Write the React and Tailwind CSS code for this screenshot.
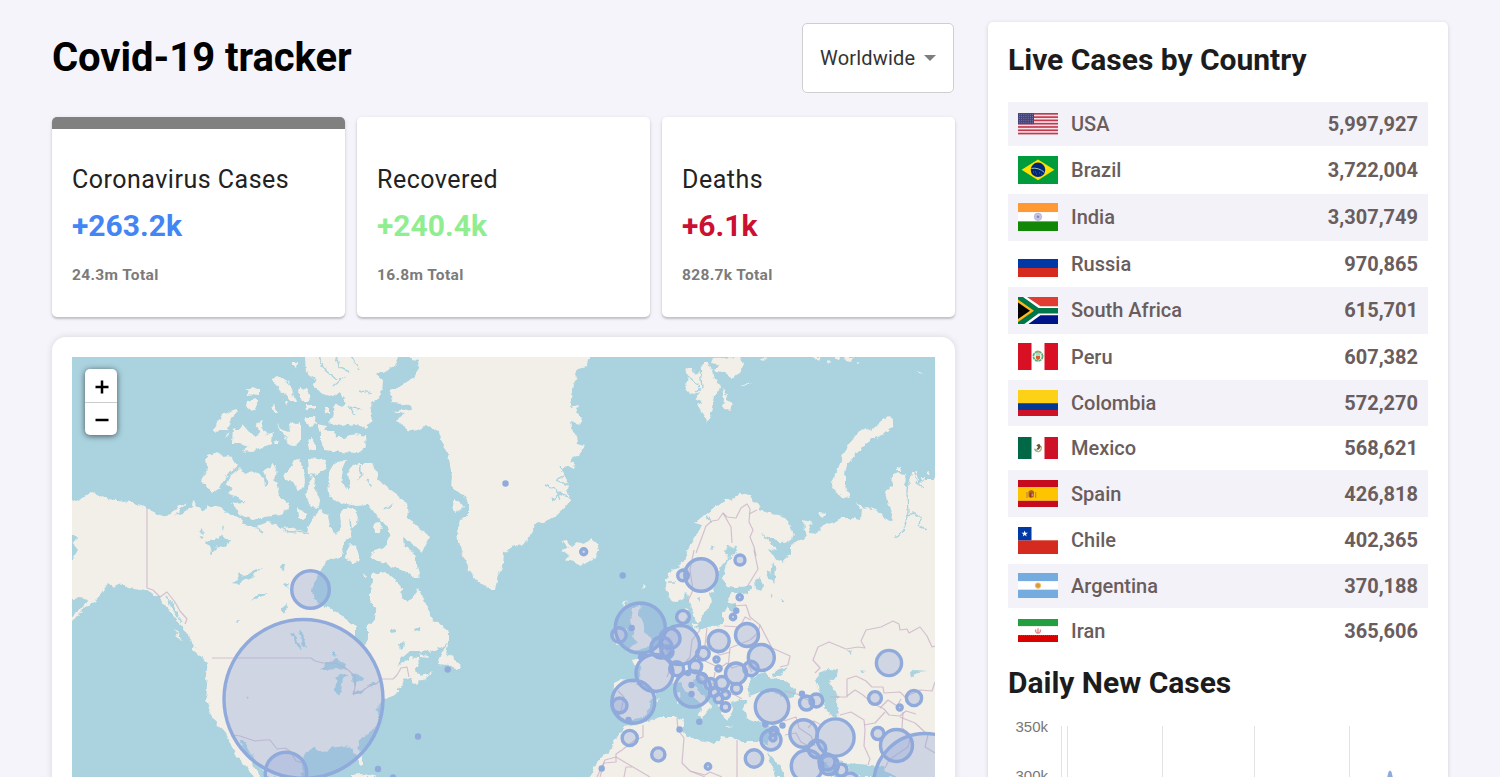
import React from "react";

const LAND = [
  // North American mainland
  "72,503 82,498 92,492 100,496 108,499 125,501 141,505 148,509 160,515 167,517 172,512 180,506 187,503 175,515 182,513 192,507 193,500 199,508 204,511 208,505 212,509 218,506 226,512 240,518 243,524 255,527 268,522 275,524 280,528 290,527 300,530 307,532 309,525 313,518 320,510 328,516 330,526 336,535 341,527 340,514 345,508 352,507 358,514 357,524 350,530 352,537 345,540 343,550 340,557 330,560 325,563 320,570 317,577 313,583 312,592 314,598 318,603 328,608 337,613 345,618 350,623 356,626 356,637 359,644 364,646 368,638 368,627 375,618 376,611 370,600 370,590 373,583 371,572 377,574 385,572 395,580 402,588 401,597 408,602 415,595 418,588 425,602 430,613 433,620 440,625 449,632 449,643 440,648 430,652 418,651 410,651 402,658 396,668 402,662 410,657 418,658 419,665 415,671 420,676 428,674 433,672 425,679 415,684 412,682 413,677 405,680 398,690 398,694 390,697 384,699 381,704 376,709 378,715 378,725 372,731 366,735 359,741 358,748 362,757 362,766 359,763 356,755 352,748 345,746 337,747 330,748 327,752 313,748 305,753 302,763 303,777 268,777 262,769 255,759 248,748 243,740 240,740 243,750 249,759 255,768 261,777 255,777 247,768 237,757 231,745 225,731 217,724 210,711 206,700 207,690 206,675 208,663 200,654 192,643 187,632 178,622 170,612 165,605 158,597 150,592 140,590 128,588 122,583 113,587 108,583 100,597 92,603 85,608 73,620 72,620",
  "206,456 218,452 224,457 230,456 238,466 230,472 225,478 220,488 212,493 206,484 202,482 207,468",
  "240,468 245,474 252,471 258,474 264,477 265,487 268,484 264,470 274,464 276,467 275,477 279,495 290,505 288,509 280,515 265,517 252,520 240,514 232,503 245,502 235,497 228,493 233,488 226,484 230,476",
  "235,409 237,413 232,418 228,430 222,430 217,433 213,430 216,424 222,415",
  "233,427 238,431 243,425 250,433 258,437 259,431 257,425 261,419 263,430 267,435 273,432 272,444 262,447 250,453 243,451 248,447 240,443 232,443",
  "277,423 282,430 290,432 289,424 295,423 301,422 301,440 295,446 289,443 284,436 288,437 280,431",
  "273,378 277,376 280,377 288,382 292,390 296,402 292,402 286,395 281,392 275,385",
  "247,390 253,387 259,389 259,395 254,394 248,395",
  "247,401 257,399 257,405 252,411 246,406",
  "300,387 306,389 310,397 308,402 303,402 299,394",
  "272,404 275,407 278,413 274,413",
  "306,405 316,405 316,408 307,409",
  "305,417 315,417 317,424 309,426 306,422",
  "307,441 313,438 316,444 315,451 309,449",
  "292,361 297,361 296,368 292,365",
  "324,407 329,407 329,413 325,412",
  "284,403 288,401 287,405",
  "228,436 230,431 225,437",
  "275,441 278,440 278,444 276,444",
  "305,357 398,357 395,366 385,372 376,374 383,380 382,390 377,400 371,402 372,412 371,422 366,429 356,424 340,426 328,423 333,418 335,403 341,407 346,403 340,392 332,397 320,393 313,385 316,380 306,372",
  "318,424 327,426 324,431 333,431 338,437 345,437 355,434 365,436 366,447 358,453 340,452 325,450 321,443 321,433",
  "284,474 289,470 294,460 300,459 303,470 305,480 304,488 298,490 293,482 286,480",
  "308,458 317,459 326,460 324,470 318,475 309,474",
  "311,475 316,478 315,488 320,500 319,508 311,507 305,495 309,487",
  "297,507 306,514 306,519 298,518",
  "329,494 328,480 330,470 336,462 347,461 343,470 341,482 348,489 351,484 348,475 351,467 360,463 372,463 378,475 377,480 387,487 395,492 403,500 410,512 407,518 418,526 429,536 426,544 422,552 410,542 403,537 404,546 412,552 417,565 420,578 414,578 407,572 393,567 383,562 372,560 371,552 385,548 387,541 391,533 386,525 375,515 368,505 356,506 347,504 335,501",
  "374,523 380,522 382,530 376,533 373,529",
  "350,543 357,549 360,559 352,564 350,560 343,558 348,550",
  "365,573 366,577 363,577",
  "448,643 446,655 453,657 459,663 460,669 456,668 449,665 437,664 441,655",
  "418,654 427,656 428,658 420,657",
  "193,646 201,652 211,660 209,664 200,656 193,650",
  "174,628 178,634 182,641 177,637",
  "350,775 360,774 370,775 378,777 350,777",
  // Greenland
  "409,357 590,357 586,366 578,368 575,378 573,390 571,407 578,405 576,414 582,418 580,425 570,422 572,432 577,436 578,444 585,446 578,455 570,460 575,464 573,469 567,466 562,470 568,480 567,490 571,500 568,505 555,517 540,523 535,524 528,540 520,546 513,545 510,550 503,553 502,567 498,575 495,590 490,590 485,585 478,583 470,572 465,560 463,555 458,541 457,530 460,520 468,514 468,503 464,495 455,490 451,485 452,478 450,465 447,450 441,440 439,432 432,428 424,427 415,431 408,430 400,424 397,419 405,414 393,411 411,409 410,405 393,403 390,395 391,391 405,383 413,378 419,368 418,361",
  "454,499 459,502 464,508 456,512 453,507",
  // Iceland
  "562,541 567,540 571,546 575,543 580,544 586,543 591,539 597,544 599,550 596,557 588,562 581,565 573,561 565,559 571,555 562,551 568,549",
  // Svalbard
  "686,368 692,368 696,376 699,372 703,363 708,363 712,370 714,380 722,385 715,395 713,408 710,417 706,422 702,412 697,405 703,402 696,398 700,392 690,395 686,386 688,376",
  "714,358 740,357 744,365 740,373 731,378 724,373 714,370 720,366 712,363",
  "722,388 727,396 726,400 733,403 731,411 726,409 722,407 724,400",
  "760,359 768,357 762,361", "741,386 752,383 745,387", "918,370 923,373 919,372",
  "814,357 821,357 819,361 816,360", "826,360 829,363 826,364", "833,357 840,357 838,360", "843,357 854,357 851,361 846,360", "857,362 860,363 857,364",
  // Novaya Zemlya
  "888,416 893,419 892,426 884,434 870,440 862,448 855,455 847,465 845,475 845,485 851,498 843,497 838,492 831,488 833,480 839,465 845,450 855,435 866,428 872,430 880,422",
  "819,512 825,513 823,518 818,515", "855,502 860,504 863,508 860,508",
  "896,468 900,467 901,471 896,471", "928,471 930,475 926,474", "921,477 926,477 922,481",
  // British Isles
  "632,608 641,606 637,615 643,620 645,632 652,640 650,647 637,650 629,651 637,643 633,637 635,630 630,620",
  "613,640 614,632 620,626 627,630 625,640 617,645", "623,603 627,601 624,607", "642,585 645,587 643,590",
  // Eurasia and Africa
  "935,480 925,480 919,484 916,472 912,472 910,482 906,486 905,474 899,473 893,475 892,485 885,492 888,505 892,515 891,523 880,512 867,507 862,508 861,520 852,518 842,518 835,522 824,525 818,533 810,532 808,526 813,523 804,520 805,530 807,537 800,540 790,545 790,553 783,558 781,552 775,557 777,551 770,542 762,534 770,538 783,542 792,540 794,534 788,522 778,514 770,513 758,510 761,506 753,502 750,495 740,493 737,498 728,499 718,505 708,513 702,518 695,523 702,525 697,535 690,545 684,560 678,567 668,573 666,587 669,597 673,603 682,600 687,593 689,602 693,612 697,624 702,620 706,609 712,602 710,593 715,587 718,575 722,565 729,557 724,551 727,546 737,547 735,554 728,560 725,568 723,578 727,587 735,588 752,585 752,590 744,593 733,593 728,597 729,603 736,602 736,610 731,611 727,606 723,613 723,625 710,626 700,630 693,628 686,626 688,617 687,608 680,611 676,617 678,627 672,628 667,630 660,638 657,647 650,653 645,653 642,658 632,660 635,666 640,667 641,674 637,682 620,680 614,683 613,700 615,710 621,717 629,720 643,717 650,707 652,698 658,692 667,687 672,683 680,681 685,690 693,697 702,703 703,711 696,713 703,718 707,712 712,706 705,698 698,690 693,680 699,677 704,687 712,695 717,703 720,711 728,721 733,711 730,703 740,700 748,700 744,708 746,717 754,722 762,720 770,722 771,732 767,744 758,742 743,742 733,738 722,736 715,744 700,740 688,737 682,730 684,720 677,717 660,717 645,722 629,726 625,727 614,741 612,748 605,755 597,763 592,772 589,777 935,777",
  "676,693 680,692 681,702 677,704", "725,725 734,726 726,727", "760,724 766,723 762,727", "655,700 659,699 657,702", "692,623 698,626 692,628",
];

const WATER = [
  "748,686 753,676 764,672 770,678 776,680 785,680 795,690 795,696 787,698 772,692 760,692 750,696",
  "772,674 779,669 788,667 782,674 774,678",
  "815,680 822,672 830,669 837,670 836,677 829,683 836,693 841,697 836,700 839,708 838,717 832,717 825,708 820,693",
  "767,752 772,758 780,766 785,777 775,777 771,764",
  "815,757 821,760 828,765 838,770 840,777 832,777 822,767",
  "840,760 847,763 870,765 883,767 888,772 897,777 860,777 848,770",
  "72,599 80,598 88,600 82,608 72,616", "72,534 76,538 74,545 78,550 72,560",
  "205,541 215,539 222,535 230,540 227,548 218,546 212,552 210,546",
  "232,583 238,580 237,573 245,576 255,570 261,568 252,577 243,581 240,584",
  "250,601 258,594 267,594 260,597",
  "290,632 295,633 298,641 303,650 299,649 294,640", "299,630 303,633 306,648 302,645",
  "321,669 327,663 336,659 340,662 346,665 347,670 337,669 328,670",
  "337,676 343,674 349,675 343,678 341,692 337,695 335,690",
  "351,673 358,674 364,681 361,682 355,681 356,687 353,684",
  "352,694 358,690 367,688 360,693 353,696", "367,687 375,683 377,685 369,687",
  "331,652 335,652 334,656 331,655", "246,695 250,698 248,699",
  "754,580 760,577 764,585 761,591 755,588", "765,570 770,572 773,579 768,578",
  "768,548 776,551 785,559 783,563 774,558", "770,550 782,552 790,553 786,559 776,558",
  "909,734 912,738 909,738", "910,672 915,670 929,671 918,672 911,678", "850,655 848,650 852,648",
  "281,565 285,565 284,570 280,569", "282,608 287,604 286,611 282,613",
  "697,598 701,597 700,602", "712,545 714,548 710,550", "770,594 773,596 771,598",
  "773,563 776,570 774,583 771,575", "781,599 785,601 784,603 781,601", "860,670 866,671 863,673",
  "200,532 203,529 204,534", "199,536 204,537 200,539", "222,528 224,525 223,531", "236,620 241,620 238,622",
  "211,550 213,555 210,554", "414,629 420,627 421,630 415,631", "391,630 395,629 396,632 391,633", "399,645 404,641 405,645 400,649",
  "284,584 289,582 288,588", "745,593 748,591 748,595",
];

// Rivers, fjords and narrow sounds
const CHANNELS = [
  "318,357 326,371 337,380", "352,357 359,370", "345,376 334,386", "336,357 340,368 350,372", "360,390 372,394", "355,415 350,407 362,410",
  "908,478 907,492 908,512 905,526 897,537 893,537", "908,515 914,513 920,518 919,526 926,529",
  "914,472 916,482 925,488", "360,465 362,476 358,480", "366,480 371,487", "392,503 384,510",
  "170,600 176,612 181,622", "166,597 173,608 178,618",
  "560,465 566,474 556,480 569,486", "552,500 560,493 570,498", "546,485 557,490 560,500",
  "700,368 702,388 695,392", "688,376 697,384 700,391",
  "680,570 688,567", "669,582 676,582", "707,516 712,522",
  "346,545 352,535 350,520", "308,533 298,531 290,533 282,528", "243,524 258,527 263,535",
];

const BORDERS = [
  "147,509 147,588 153,590 160,597 167,592 175,602 180,611 187,619 185,624",
  "212,658 311,658 315,661 323,663 335,663 347,669 355,676 355,688 353,694 362,691 368,687 377,683 382,679 393,679 397,675 401,668 407,667 409,677",
  "233,735 240,736 255,741 265,740 270,740 277,749 285,748 290,751 296,761 303,763",
  "696,553 702,537 706,526 712,521 718,520 723,513 727,517 736,518 741,508 747,504 750,509 749,522 753,530 750,537 754,547 756,556",
  "723,513 731,527 732,543", "749,514 757,510", "754,550 758,569 747,587", "694,550 690,570 693,590 688,601",
  "733,606 746,605 750,617 760,625 758,633 750,640 730,648 728,668", "724,626 740,627 745,617 751,620",
  "707,628 705,645 713,650 720,655 730,652", "705,645 696,652 705,661 720,668 727,663 732,668 747,663 752,672",
  "690,657 683,665 671,666 667,677", "700,630 692,640 690,657", "660,640 668,652 672,664", "636,684 655,690",
  "618,691 624,697 621,711 617,713", "715,672 713,684 722,692 735,695 742,699", "760,625 772,648 790,656 788,665 780,667",
  "815,673 820,668 813,660 818,647 829,642 846,649 858,647 865,648 861,641 866,630 881,627 893,621 899,624 900,630 907,629 909,633 920,627 927,636 932,647 935,646",
  "830,697 847,697 847,679 856,676 866,681 872,687 883,687 884,693 900,692 905,697 920,690 932,691 935,682",
  "847,696 855,690 863,695 872,703 884,709 889,715 900,716 906,711 916,714",
  "840,715 851,712 864,720 865,730 864,746 870,759 868,765", "864,725 875,723 885,712", "903,712 902,728 911,735 908,747 896,755 889,760 885,768",
  "900,717 915,723 928,735 925,747 935,753", "784,691 797,694 808,700", "784,721 796,717 799,728 811,736 815,746",
  "785,735 796,733 801,742 810,747", "677,718 678,730 684,738 682,763 690,771 705,777", "737,740 737,777",
  "643,725 643,737 635,740 622,750 616,754 616,762 604,763 600,777", "616,757 605,760 597,777", "616,757 650,777", "624,777 626,767 632,767",
  "880,708 888,700 897,706 901,699", "808,728 814,721 823,726", "690,771 705,775 710,772 722,777",
];

const CASES = [
  [303.5,699,79.5],[310.5,589.5,18.8],[286,773,20.8],[640.3,628,25],[619,635,7.2],[680,645,19.5],[670,638.5,10],[661.5,647.5,10.5],[667,652,6],
  [654.5,673,18.5],[633.3,701.8,21.5],[619.5,705.5,7.5],[676.7,668.7,7],[695.5,666.5,6.2],[703,653.5,6.2],[692.7,689,18],[718.7,641,10.5],
  [747,635,11.5],[761.3,657.5,13],[736,673.5,10.5],[751,668.5,7.2],[702,678,4.5],[710.5,684,5.5],[722,683,6.5],[736.5,688.5,5],[718.5,698.5,4.2],
  [725.5,694.5,4],[725.5,707,4.3],[683,617,6.4],[683,575.5,5.3],[701,575,16.2],[740,560,5],[629.7,738,7.6],[658.3,754.5,6.6],[754,758.5,8.7],
  [772,706.5,16.7],[774,731,4],[771,740,10],[806.5,703,7],[816.3,700.5,6.5],[803.5,733.5,13.7],[835.5,737.5,18.6],[817,749,8.8],[807,766,15.7],
  [827,762,8],[829,765,9.5],[841,770,6],[850,781,8],[889,663,12.6],[875,698,6.4],[914,698,7.6],[878,733.5,6],[896.5,745.5,16],[925,785,51.5],
  [583.7,551.7,3],[739.7,597.3,2.6],[733,617,2.7],[716.5,659.5,2.5],[718.5,668.5,2.6],[708,766.5,2.7],[899.7,707.5,2.5],[773,738,3],[714,692,4.5],
];

const DOTS = [
  [505.5,483.5],[622.7,575.5],[631.7,628],[447.7,669.5],[418,736.5],[378,769],[393,777.5],[628.5,720],[641,657],[644,655],[691.5,685],[691.5,694],
  [736.3,610.7],[679.5,729.5],[699.3,721.7],[601.7,768.5],[765,724.5],[782.5,725.5],[802,693.8],[688,673],
];

function WorldMap() {
  return (
    <svg className="block h-[420px] w-[863px]" viewBox="72 357 863 420">
      <defs>
        <filter id="coast" x="-2%" y="-2%" width="104%" height="104%" colorInterpolationFilters="sRGB">
          <feTurbulence type="fractalNoise" baseFrequency="0.17" numOctaves="2" seed="8" />
          <feDisplacementMap in="SourceGraphic" scale="5.5" xChannelSelector="R" yChannelSelector="G" result="d" />
          <feGaussianBlur in="d" stdDeviation="0.35" />
        </filter>
      </defs>
      <rect x="72" y="357" width="863" height="420" fill="#aad3df" />
      <g filter="url(#coast)">
        <rect x="52" y="337" width="903" height="460" fill="#aad3df" />
        <g fill="#f2efe9">
          {LAND.map((p) => <polygon key={p} points={p} />)}
          <rect x="934" y="478" width="14" height="310" />
          <rect x="589" y="776" width="360" height="14" />
          <rect x="60" y="503" width="13" height="31" />
          <rect x="60" y="560" width="13" height="38" />
          <rect x="305" y="345" width="92" height="13" />
          <rect x="409" y="345" width="181" height="13" />
        </g>
        <g fill="#aad3df">{WATER.map((p) => <polygon key={p} points={p} />)}</g>
        <g fill="none" stroke="#aad3df" strokeWidth="1.4">{CHANNELS.map((p) => <polyline key={p} points={p} />)}</g>
      </g>
      <g fill="none" stroke="#c8b0c6" strokeWidth="1.2" strokeOpacity="0.75" strokeLinejoin="round">
        {BORDERS.map((p) => <polyline key={p} points={p} />)}
      </g>
      <g fill="#8ea7da" fillOpacity="0.35" stroke="#8faadb" strokeWidth="3.4">
        {CASES.map(([x, y, r]) => <circle key={`${x}-${y}`} cx={x} cy={y} r={r} />)}
      </g>
      <g fill="#8faadb">
        {DOTS.map(([x, y]) => <circle key={`${x}-${y}`} cx={x} cy={y} r="3.2" />)}
      </g>
    </svg>
  );
}

function Stripes({ rows }) {
  return rows.map(([y, h, c]) => <rect key={y} y={y} width="40" height={h} fill={c} />);
}

const FLAGS = {
  USA: (
    <>
      <rect width="40" height="21.4" fill="#f4e3e6" />
      {[0, 1, 2, 3, 4, 5, 6].map((i) => <rect key={i} y={i * 3.29} width="40" height="1.65" fill="#c2394f" />)}
      <rect width="16" height="11.2" fill="#45447c" />
      {[1.4, 3.5, 5.6, 7.7, 9.8].map((y) => <path key={y} d={`M1 ${y}H15.5`} stroke="#9c9cc0" strokeWidth=".7" strokeDasharray=".8 1.4" />)}
    </>
  ),
  Brazil: (
    <>
      <rect width="40" height="28" fill="#009b3a" />
      <path d="M20 3.4 36.4 13.8 20 24.2 3.6 13.8Z" fill="#fedf00" />
      <circle cx="20" cy="13.8" r="7.3" fill="#002776" />
      <path d="M13.3 12.4Q20.5 11.2 26.4 16.4" fill="none" stroke="#9fc0b8" strokeWidth="1" />
      <path d="M15 16h1m2 2h1m2-1h1m-5-1h1m5 2h1" stroke="#6f86b4" strokeWidth=".6" />
    </>
  ),
  India: (
    <>
      <Stripes rows={[[0, 9.2, "#ff9933"], [9.2, 9.2, "#ffffff"], [18.4, 9.6, "#138808"]]} />
      <circle cx="20" cy="13.8" r="3.7" fill="#c6c6e6" stroke="#a9a9d6" strokeWidth=".7" />
      <circle cx="20" cy="13.8" r="1.4" fill="#8585c4" />
    </>
  ),
  Russia: <Stripes rows={[[0, 9, "#ffffff"], [9, 9, "#0039a6"], [18, 9, "#d52b1e"]]} />,
  "South Africa": (
    <>
      <rect width="40" height="13.8" fill="#e03c31" />
      <rect y="13.8" width="40" height="14" fill="#001489" />
      <path d="M0 0H9L22.5 9.2H40V18.3H22.5L9 28H0Z" fill="#fff" />
      <path d="M0 0H5L20.5 11H40V16.5H20.5L5 28H0Z" fill="#007749" />
      <path d="M0 2.6 16 13.8 0 25Z" fill="#ffb81c" />
      <path d="M0 5.5 12 13.8 0 22Z" fill="#000" />
    </>
  ),
  Peru: (
    <>
      <rect width="40" height="27" fill="#fff" />
      <path d="M0 0H13.5V27H0ZM26.5 0H40V27H26.5Z" fill="#d91023" />
      <circle cx="20" cy="13.3" r="4.6" fill="none" stroke="#5bae75" strokeWidth="1.8" strokeDasharray="3 .6" />
      <path d="M17.7 10H22.3V13H17.7Z" fill="#a9d9d5" />
      <path d="M17.8 13H22.2V15.4L20 17.2 17.8 15.4Z" fill="#d5602d" />
      <circle cx="20" cy="8.6" r="1.2" fill="#bba540" />
    </>
  ),
  Colombia: <Stripes rows={[[0, 13.2, "#fcd116"], [13.2, 6.8, "#003893"], [20, 7, "#ce1126"]]} />,
  Mexico: (
    <>
      <rect width="40" height="23" fill="#fff" />
      <path d="M0 0H13.5V23H0Z" fill="#006847" />
      <path d="M26.5 0H40V23H26.5Z" fill="#ce1126" />
      <path d="M16.5 11.6Q17.5 15 20.8 14.6 24 13.5 23.2 9.5" fill="none" stroke="#a9b27b" strokeWidth="1.3" />
      <path d="M18.2 8.2 21.2 6.8 23 9.4 20.8 12.8 18.4 12.2 20.2 10Z" fill="#71502e" />
      <path d="M17.2 13h2.5" stroke="#519da3" />
    </>
  ),
  Spain: (
    <>
      <Stripes rows={[[0, 7, "#c60b1e"], [7, 13.8, "#ffc400"], [20.8, 7, "#c60b1e"]]} />
      <path d="M10.5 11.5Q13.2 8.3 16 11.5V16.5Q13.2 19 10.5 16.5Z" fill="#ad6526" />
      <path d="M9 12v6M17.6 12v6" stroke="#b68a4b" strokeWidth="1.2" />
      <path d="M11.6 12.8h1.7v4.5h-1.7Z" fill="#a92b27" />
      <circle cx="14.5" cy="15" r="1" fill="#bd8fa0" />
    </>
  ),
  Chile: (
    <>
      <rect width="40" height="27" fill="#fff" />
      <rect y="13.3" width="40" height="13.7" fill="#d52b1e" />
      <rect width="13.5" height="13.3" fill="#0039a6" />
      <path d="M6.7 3.5 7.5 5.8H9.9L8 7.2 8.7 9.5 6.7 8.1 4.7 9.5 5.4 7.2 3.5 5.8H5.9Z" fill="#fff" />
    </>
  ),
  Argentina: (
    <>
      <Stripes rows={[[0, 8.3, "#74acdf"], [8.3, 8.4, "#ffffff"], [16.7, 8.4, "#74acdf"]]} />
      <circle cx="20" cy="12.6" r="3.1" fill="#f0be67" />
      <circle cx="20" cy="12.6" r="2.1" fill="#d99a35" />
    </>
  ),
  Iran: (
    <>
      <Stripes rows={[[0, 7.4, "#239f40"], [7.4, 8.6, "#ffffff"], [16, 7, "#da0000"]]} />
      <path d="M0 7.6H40M0 15.8H40" stroke="#fff" strokeWidth=".8" strokeDasharray="1 1" opacity=".7" />
      <path d="M17.7 10.5Q17 13 19.2 14M22.3 10.5Q23 13 20.8 14M20 9.3V15" fill="none" stroke="#e98a8a" strokeWidth="1.4" />
    </>
  ),
};

const COUNTRIES = [
  ["USA", "5,997,927", 44, 21.4],
  ["Brazil", "3,722,004", 47.5, 27.5],
  ["India", "3,307,749", 47, 27.5],
  ["Russia", "970,865", 46.5, 26.7],
  ["South Africa", "615,701", 46.5, 27.3],
  ["Peru", "607,382", 46.5, 26.7],
  ["Colombia", "572,270", 46, 26.5],
  ["Mexico", "568,621", 44, 22.7],
  ["Spain", "426,818", 47, 27.3],
  ["Chile", "402,365", 46.5, 26.5],
  ["Argentina", "370,188", 44.8, 25],
  ["Iran", "365,606", 44.5, 22.8],
];

function InfoBox({ title, value, total, color, active }) {
  return (
    <div className={`h-[200px] flex-1 overflow-hidden rounded-[5px] bg-white px-5 shadow-[0_2px_2px_rgba(0,0,0,0.16),0_1px_4px_rgba(0,0,0,0.1)] ${active ? "border-t-[12px] border-[#808080] pt-[35px]" : "pt-[47px]"}`}>
      <div className="text-[25px] leading-8 tracking-[0.5px] text-[#222]">{title}</div>
      <div className={`mt-3 text-[30px] leading-9 font-bold ${color}`}>{value}</div>
      <div className="mt-5 text-[15.5px] leading-[22px] font-bold tracking-[0.35px] text-[#7b7b7b]">{total}</div>
    </div>
  );
}

export default function App() {
  return (
    <main className="flex h-[777px] w-[1500px] overflow-hidden bg-[#f5f4fb] pt-[22px] pl-[52px] font-['Roboto',sans-serif]">
      <section className="w-[903px]">
        <header className="flex h-[71px] items-center justify-between pr-px">
          <h1 className="text-[40px] leading-[48px] font-bold tracking-[-0.05px] text-black">Covid-19 tracker</h1>
          <button className="flex h-[70px] w-[152px] items-center justify-between rounded-[5px] border border-[#cfcfd2] bg-white pr-[17px] pl-[17px] text-[20px] tracking-[0.2px] text-[#333]">
            Worldwide
            <svg className="h-[6px] w-3" viewBox="0 0 12 6"><path d="M0 0H12L6 6Z" fill="#7d7d7d" /></svg>
          </button>
        </header>
        <div className="mt-6 flex gap-3">
          <InfoBox active title="Coronavirus Cases" value="+263.2k" total="24.3m Total" color="text-[#4285f4]" />
          <InfoBox title="Recovered" value="+240.4k" total="16.8m Total" color="text-[#90ee90]" />
          <InfoBox title="Deaths" value="+6.1k" total="828.7k Total" color="text-[#cc1034]" />
        </div>
        <div className="relative mt-5 h-[480px] rounded-[14px] bg-white p-5 shadow-[0_0_7px_rgba(0,0,0,0.12)]">
          <WorldMap />
          <div className="absolute top-8 left-[33px] flex h-[66px] w-8 flex-col overflow-visible rounded-[5px] bg-white shadow-[0_1px_6px_rgba(0,0,0,0.6)]">
            <button className="flex h-[34px] items-center justify-center border-b border-[#ccc] pt-[2px] pl-px" aria-label="Zoom in">
              <svg className="h-[14px] w-[14px]" viewBox="0 0 14 14"><path d="M.5 7H13.5M7 .5V13.5" stroke="#000" strokeWidth="2.5" /></svg>
            </button>
            <button className="flex h-8 items-center justify-center pt-[2px] pl-px" aria-label="Zoom out">
              <svg className="h-[14px] w-[14px]" viewBox="0 0 14 14"><path d="M.5 7H13.5" stroke="#000" strokeWidth="2.5" /></svg>
            </button>
          </div>
        </div>
      </section>
      <aside className="ml-[33px] h-[780px] w-[460px] rounded-[5px] bg-white px-5 pt-5 shadow-[0_1px_4px_rgba(0,0,0,0.15)]">
        <h2 className="text-[30px] leading-9 font-bold tracking-[-0.02px] text-[#1c1c1c]">Live Cases by Country</h2>
        <div className="mt-6">
          {COUNTRIES.map(([name, count, height, flagHeight]) => (
            <div key={name} style={{ height }} className="flex items-center px-[10px] text-[20px] font-medium text-[#6a5d5d] odd:bg-[#f3f2f8]">
              <svg width="40" height={flagHeight} viewBox={`0 0 40 ${flagHeight}`}>{FLAGS[name]}</svg>
              <span className="ml-[13px] flex-1">{name}</span>
              <span className="font-bold">{count}</span>
            </div>
          ))}
        </div>
        <h2 className="mt-3 text-[30px] leading-9 font-bold tracking-[-0.02px] text-[#1c1c1c]">Daily New Cases</h2>
        <div className="mt-[18px] flex">
          <div className="flex w-10 flex-col items-end gap-[33px] font-['Liberation_Sans',sans-serif] text-[15px] leading-4 text-[#777]">
            <span>350k</span>
            <span>300k</span>
          </div>
          <svg className="mt-[7px] ml-3 h-[60px] w-[360px]" viewBox="0 0 360 60">
            <path d="M1.5 0V60M7.5 0V60M102.5 0V60M194.5 0V60M289.5 0V60" stroke="#e3e3e3" />
            <path d="M325 60 328.5 46Q330 43 331.5 46L335 60Z" fill="#8faadb" />
          </svg>
        </div>
      </aside>
    </main>
  );
}
